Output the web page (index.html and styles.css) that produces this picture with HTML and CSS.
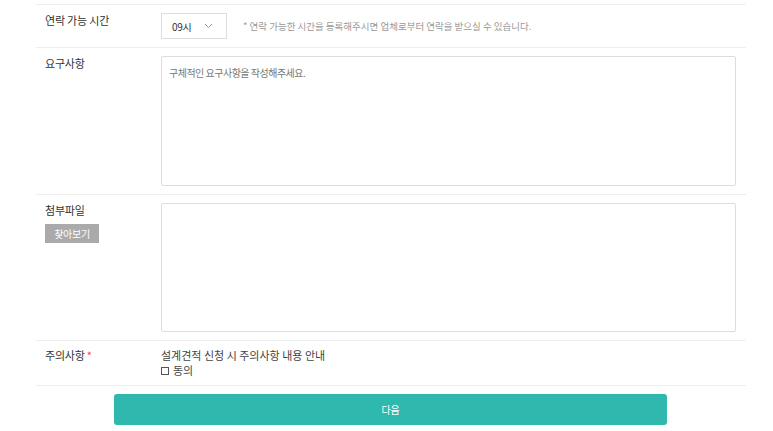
FILE: index.html
```html
<!DOCTYPE html>
<html>
 <head>
  <meta charset="utf-8">
  <title>설계견적 신청</title>
  <link rel="stylesheet" href="styles.css">
 </head>
 <body>
  <div class="form">
    <div class="row">
      <div class="label">연락 가능 시간</div>
      <div class="field field-time">
        <div class="select">
          <span>09시</span>
          <svg width="9" height="6" viewBox="0 0 9 6"><polyline points="1,1 4.5,4.5 8,1" fill="none" stroke="#999" stroke-width="1"/></svg>
        </div>
        <p class="note">* 연락 가능한 시간을 등록해주시면 업체로부터 연락을 받으실 수 있습니다.</p>
      </div>
    </div>
    <div class="row">
      <div class="label">요구사항</div>
      <div class="field">
        <textarea class="memo" placeholder="구체적인 요구사항을 작성해주세요."></textarea>
      </div>
    </div>
    <div class="row">
      <div class="label">
        첨부파일
        <button class="find">찾아보기</button>
      </div>
      <div class="field">
        <div class="files"></div>
      </div>
    </div>
    <div class="row">
      <div class="label">주의사항<span class="req">*</span></div>
      <div class="field field-notice">
        <p class="notice">설계견적 신청 시 주의사항 내용 안내</p>
        <label class="agree"><span class="check"></span>동의</label>
      </div>
    </div>
  </div>
  <div class="actions">
    <button class="next">다음</button>
  </div>
 </body>
</html>
```

FILE: styles.css
```css
* {
  margin: 0;
  padding: 0;
  box-sizing: border-box;
}
body {
  font-family: "Noto Sans CJK KR", "Noto Sans", sans-serif;
  color: #333;
  background: #fff;
}
.form {
  width: 710px;
  margin: 4px 0 0 36px;
  border-top: 1px solid #eee;
}
.row {
  display: flex;
  border-bottom: 1px solid #eee;
  padding: 8px 10px 8px 0;
}
.row:last-child {
  padding: 7px 10px 7px 0;
}
.label {
  width: 125px;
  padding-left: 9px;
  font-size: 11px;
  line-height: 15px;
  letter-spacing: -0.2px;
}
.label .req {
  color: #e84c4c;
  margin-left: 2px;
}
.field {
  flex: 1;
}
.field-time {
  display: flex;
  align-items: center;
}
.select {
  width: 66px;
  height: 26px;
  border: 1px solid #ddd;
  display: flex;
  align-items: center;
  justify-content: space-between;
  padding: 0 13px 0 10px;
  font-size: 10px;
  letter-spacing: -0.3px;
  color: #333;
}
.select svg {
  display: block;
}
.note {
  margin-left: 16px;
  font-size: 9.5px;
  letter-spacing: 0;
  color: #999;
}
.memo {
  display: block;
  width: 100%;
  height: 130px;
  border: 1px solid #ddd;
  border-radius: 2px;
  padding: 9px 7px;
  resize: none;
  font-family: "Noto Sans CJK KR", "Noto Sans", sans-serif;
  font-size: 10px;
  line-height: 14px;
  letter-spacing: -0.5px;
  color: #333;
  outline: none;
}
.memo::placeholder {
  color: #777;
}
.files {
  height: 129px;
  border: 1px solid #ddd;
  border-radius: 2px;
}
.find {
  display: block;
  margin-top: 6px;
  width: 54px;
  height: 19px;
  border: none;
  background: #aaa;
  color: #fff;
  font-family: "Noto Sans CJK KR", "Noto Sans", sans-serif;
  font-size: 10px;
  letter-spacing: -0.3px;
}
.field-notice {
  font-size: 11px;
  line-height: 15px;
  letter-spacing: 0;
  color: #444;
}
.agree {
  display: flex;
  align-items: center;
}
.check {
  width: 8px;
  height: 8px;
  border: 1px solid #555;
  margin-right: 4px;
}
.actions {
  margin: 8px 0 0 114px;
}
.next {
  width: 553px;
  height: 31px;
  border: none;
  border-radius: 3px;
  background: #2fb8ad;
  color: #fff;
  font-family: "Noto Sans CJK KR", "Noto Sans", sans-serif;
  font-size: 10px;
  letter-spacing: -0.3px;
}
```
